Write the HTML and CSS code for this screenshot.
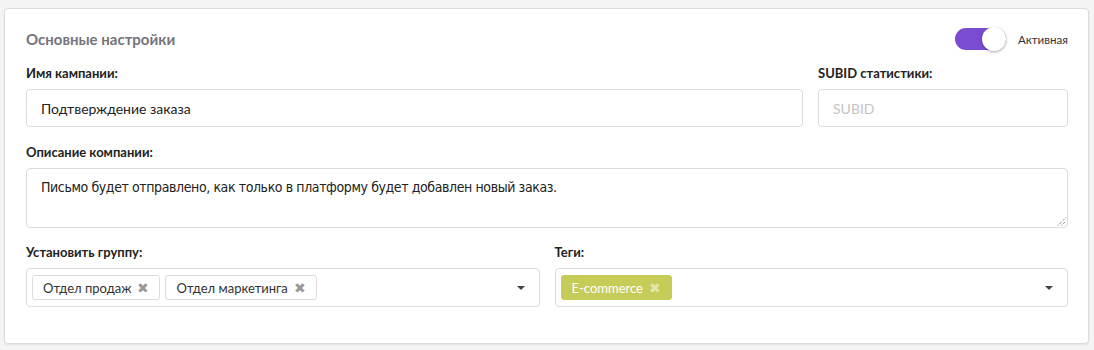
FILE: index.html
```html
<!DOCTYPE html>
<html lang="ru">
<head>
<meta charset="utf-8">
<link rel="stylesheet" href="styles.css">
</head>
<body>
<div class="page">
  <section class="card">
    <header class="card-head">
      <h2 class="title">Основные настройки</h2>
      <label class="switch-wrap">
        <span class="switch"><span class="knob"></span></span>
        <span class="switch-text">Активная</span>
      </label>
    </header>
    <div class="row row-top">
      <div class="field">
        <div class="label">Имя кампании:</div>
        <div class="input">Подтверждение заказа</div>
      </div>
      <div class="field">
        <div class="label">SUBID статистики:</div>
        <div class="input placeholder">SUBID</div>
      </div>
    </div>
    <div class="field field-desc">
      <div class="label">Описание компании:</div>
      <div class="textarea">Письмо будет отправлено, как только в платформу будет добавлен новый заказ.
        <svg class="grip" width="9" height="9" viewBox="0 0 9 9"><path d="M1 8.5 L8.5 1 M4.5 8.5 L8.5 4.5" stroke="#555" stroke-width="1" stroke-dasharray="1 1"/></svg>
      </div>
    </div>
    <div class="row row-bottom">
      <div class="field">
        <div class="label">Установить группу:</div>
        <div class="select">
          <span class="chip">Отдел продаж <span class="x">✖</span></span>
          <span class="chip">Отдел маркетинга <span class="x">✖</span></span>
          <span class="caret"></span>
        </div>
      </div>
      <div class="field">
        <div class="label">Теги:</div>
        <div class="select">
          <span class="chip chip-green">E-commerce <span class="x">✖</span></span>
          <span class="caret"></span>
        </div>
      </div>
    </div>
  </section>
</div>
</body>
</html>
```

FILE: styles.css
```css
* { box-sizing: border-box; }
html, body { margin: 0; padding: 0; }
body {
  background: #f4f4f4;
  font-family: "Lato", "Noto Sans", sans-serif;
  color: #333;
  width: 1094px;
  height: 350px;
  overflow: hidden;
}
.page { padding: 8px 5px 0 4px; }
.card {
  background: #fff;
  border: 1px solid #dcdcdc;
  border-radius: 4px;
  box-shadow: 0 1px 2px rgba(0,0,0,0.08);
  height: 336px;
  padding: 17px 20px 0 21px;
}
.card-head {
  display: flex;
  justify-content: space-between;
  align-items: center;
  height: 26px;
  margin-bottom: 14px;
}
.title {
  margin: 0;
  font-size: 15px;
  font-weight: 700;
  color: #76737a;
}
.switch-wrap { display: flex; align-items: center; gap: 12px; }
.switch {
  width: 51px;
  height: 22px;
  border-radius: 11px;
  background: #7b4bd1;
  position: relative;
  display: block;
}
.knob {
  position: absolute;
  right: 0;
  top: -1px;
  width: 24px;
  height: 24px;
  border-radius: 50%;
  background: #fff;
  box-shadow: 0 1px 3px rgba(0,0,0,0.35);
}
.switch-text { font-size: 11.6px; color: #333; }
.row { display: flex; gap: 15px; }
.row-top .field:first-child { flex: 1; }
.row-top .field:last-child { width: 250px; }
.row-bottom .field { flex: 1; }
.field { margin-bottom: 18px; }
.field-desc { margin-bottom: 17px; }
.label {
  font-size: 13px;
  font-weight: 700;
  color: #222;
  margin-bottom: 8px;
  line-height: 15px;
}
.input {
  height: 38px;
  border: 1px solid #dcdcdc;
  border-radius: 4px;
  padding: 0 14px;
  display: flex;
  align-items: center;
  font-size: 14px;
  color: #222;
}
.placeholder { color: #c4c4c4; }
.textarea {
  height: 60px;
  border: 1px solid #dcdcdc;
  border-radius: 4px;
  padding: 10px 14px;
  font-family: "DejaVu Sans Condensed", "Liberation Sans", sans-serif;
  font-size: 14px;
  letter-spacing: -0.4px;
  color: #222;
  position: relative;
}
.grip { position: absolute; right: 1px; bottom: 1px; }
.select {
  height: 39px;
  border: 1px solid #dcdcdc;
  border-radius: 4px;
  padding: 0 5px;
  display: flex;
  align-items: center;
  gap: 5px;
}
.chip {
  height: 25px;
  border: 1px solid #dcdcdc;
  border-radius: 3px;
  padding: 0 10px;
  display: inline-flex;
  align-items: center;
  gap: 6px;
  font-size: 13px;
  color: #333;
}
.chip .x { color: #999; font-size: 14px; line-height: 1; }
.chip-green { background: #c5cc58; border-color: #c5cc58; color: #fff; }
.chip-green .x { color: #e2e6ad; }
.caret {
  margin-left: auto;
  margin-right: 9px;
  width: 0; height: 0;
  border-left: 4px solid transparent;
  border-right: 4px solid transparent;
  border-top: 4px solid #444;
}
```
